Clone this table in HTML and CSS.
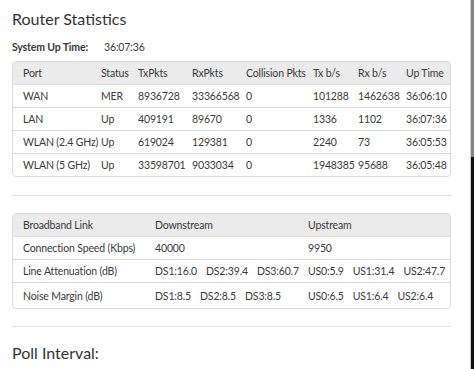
FILE: index.html
```html
<!DOCTYPE html>
<html>
<head>
<meta charset="utf-8">
<link rel="stylesheet" href="styles.css">
</head>
<body>
<main class="page">
  <h1 class="title">Router Statistics</h1>
  <div class="uptime"><span class="uptime-label">System Up Time:</span><span>36:07:36</span></div>

  <div class="card">
    <table class="grid grid-ports">
      <colgroup>
        <col class="c-port"><col class="c-status"><col class="c-tx"><col class="c-rx"><col class="c-col"><col class="c-txb"><col class="c-rxb"><col>
      </colgroup>
      <thead>
        <tr><th>Port</th><th>Status</th><th>TxPkts</th><th>RxPkts</th><th>Collision Pkts</th><th>Tx b/s</th><th>Rx b/s</th><th>Up Time</th></tr>
      </thead>
      <tbody>
        <tr><td>WAN</td><td>MER</td><td>8936728</td><td>33366568</td><td>0</td><td>101288</td><td>1462638</td><td>36:06:10</td></tr>
        <tr><td>LAN</td><td>Up</td><td>409191</td><td>89670</td><td>0</td><td>1336</td><td>1102</td><td>36:07:36</td></tr>
        <tr><td>WLAN (2.4 GHz)</td><td>Up</td><td>619024</td><td>129381</td><td>0</td><td>2240</td><td>73</td><td>36:05:53</td></tr>
        <tr><td>WLAN (5 GHz)</td><td>Up</td><td>33598701</td><td>9033034</td><td>0</td><td>1948385</td><td>95688</td><td>36:05:48</td></tr>
      </tbody>
    </table>
  </div>

  <hr class="rule">

  <div class="card">
    <table class="grid grid-link">
      <colgroup><col class="c-name"><col class="c-down"><col></colgroup>
      <thead>
        <tr><th>Broadband Link</th><th>Downstream</th><th>Upstream</th></tr>
      </thead>
      <tbody>
        <tr><td>Connection Speed (Kbps)</td><td>40000</td><td>9950</td></tr>
        <tr><td>Line Attenuation (dB)</td>
          <td><div class="vals"><span>DS1:16.0</span><span>DS2:39.4</span><span>DS3:60.7</span></div></td>
          <td><div class="vals"><span>US0:5.9</span><span>US1:31.4</span><span>US2:47.7</span></div></td></tr>
        <tr><td>Noise Margin (dB)</td>
          <td><div class="vals"><span>DS1:8.5</span><span>DS2:8.5</span><span>DS3:8.5</span></div></td>
          <td><div class="vals"><span>US0:6.5</span><span>US1:6.4</span><span>US2:6.4</span></div></td></tr>
      </tbody>
    </table>
  </div>

  <hr class="rule rule-2">

  <h2 class="title title-poll">Poll Interval:</h2>
</main>
<div class="edge"><div class="edge-top"></div><div class="edge-bottom"></div></div>
</body>
</html>
```

FILE: styles.css
```css
html, body {
  margin: 0;
  padding: 0;
  background: #ffffff;
}
body {
  font-family: Lato, "Liberation Sans", sans-serif;
  color: #3a3a3a;
  overflow: hidden;
  height: 369px;
}
.page {
  width: 439px;
  padding: 6px 0 0 12px;
}
.title {
  margin: 0;
  font-size: 16px;
  font-weight: 400;
  line-height: 26px;
  color: #333333;
}
.uptime {
  display: flex;
  font-size: 10.5px;
  letter-spacing: -0.15px;
  line-height: 16px;
  margin-top: 7px;
}
.uptime-label {
  font-weight: 700;
  width: 92px;
}
.card {
  margin-top: 6px;
  border: 1px solid #dcdcdc;
  border-radius: 4px;
  overflow: hidden;
}
.grid {
  width: 100%;
  border-collapse: collapse;
  table-layout: fixed;
  font-size: 10.5px;
  letter-spacing: -0.15px;
}
.grid th, .grid td {
  text-align: left;
  font-weight: 400;
  padding: 0;
  height: 22px;
  white-space: nowrap;
  border-top: 1px solid #dcdcdc;
}
.grid thead th {
  border-top: none;
  background: #ebebeb;
}
.grid th:first-child, .grid td:first-child {
  padding-left: 10px;
}
.c-port { width: 88px; }
.c-status { width: 37px; }
.c-tx { width: 54px; }
.c-rx { width: 54px; }
.c-col { width: 67px; }
.c-txb { width: 45px; }
.c-rxb { width: 48px; }
.c-name { width: 142px; }
.c-down { width: 153px; }
.vals {
  display: flex;
  gap: 9px;
}
.grid-link tbody tr:last-child td { height: 25px; }
.rule {
  border: none;
  border-top: 1px solid #e3e3e3;
  margin: 18px 0 0 0;
  height: 0;
}
.rule + .card { margin-top: 17px; }
.rule-2 { margin-top: 17px; }
.title-poll {
  margin-top: 13px;
}
.edge {
  position: absolute;
  top: 0;
  right: 0;
  width: 3px;
  height: 369px;
  border-left: 1px solid #d0d0d0;
  display: flex;
  flex-direction: column;
}
.edge-top {
  height: 157px;
  background: #858585;
}
.edge-bottom {
  flex: 1;
  background: #111111;
}
```
